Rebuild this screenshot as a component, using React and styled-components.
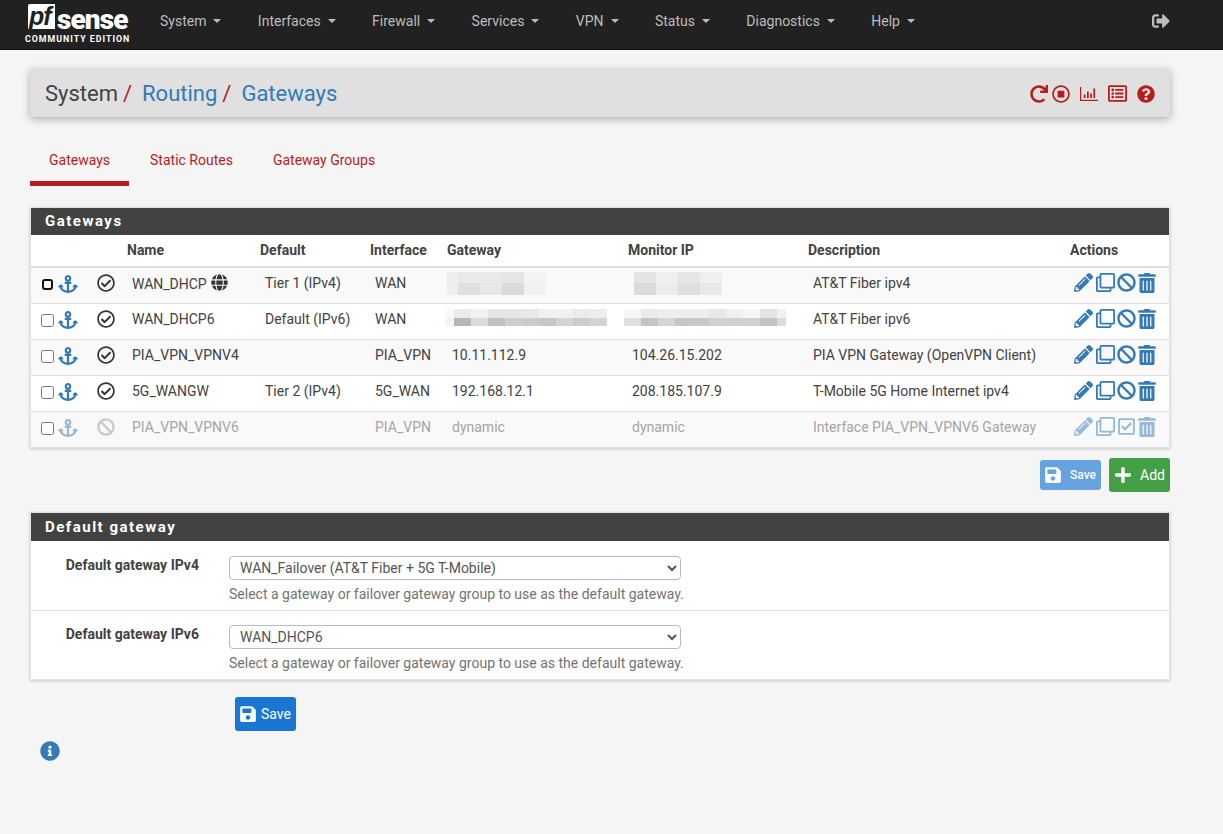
import React from 'react';
import styled, { createGlobalStyle } from 'styled-components';
import { FaAnchor, FaBan, FaGlobe, FaInfoCircle, FaPencilAlt, FaPlus, FaQuestionCircle, FaRegCheckCircle, FaRegCheckSquare, FaRegClone, FaRegStopCircle, FaRedo, FaRegListAlt, FaSave, FaSignOutAlt, FaTrashAlt } from 'react-icons/fa';

const Global = createGlobalStyle`
  html, body { margin: 0; padding: 0; background: #f5f5f5; }
  body { font-family: Roboto, "Liberation Sans", sans-serif; font-size: 14px; color: #424242; }
  * { box-sizing: border-box; }
`;

const Nav = styled.nav`
  height: 50px; background: #212121; border-bottom: 1px solid #0d0d0d;
  display: flex; align-items: center; padding: 0 53px 8px 26px; color: #bdbdbd;
`;
const Logo = styled.div`
  width: 104px; align-self: flex-start; padding-top: 4px; display: flex; flex-direction: column; align-items: flex-start; color: #fff;
`;
const LogoTop = styled.div`display: flex; align-items: flex-end; height: 25px; margin-left: 2px;`;
const Pf = styled.span`
  background: #fff; color: #212121; font: italic 900 25px/25px "Liberation Sans", sans-serif;
  height: 25px; width: 27px; padding-left: 1px; border-radius: 2px 0 0 0; letter-spacing: -1px;
`;
const Sense = styled.span`font: 900 28px/25px Roboto, sans-serif; margin-left: 2px; letter-spacing: -.9px; height: 25px; position: relative; top: 3px;`;
const Edition = styled.div`font: 700 8.8px/10px Roboto, sans-serif; letter-spacing: 1px; white-space: nowrap; margin: 5px 0 0 -1px;`;
const Menu = styled.div`display: flex; margin-left: 30px; flex: 1; gap: 36.4px;`;
const MenuItem = styled.div`
  display: flex; align-items: center; gap: 7px; font-size: 14px; white-space: nowrap;
  &::after { content: ''; border-top: 4px solid #bdbdbd; border-left: 4px solid transparent; border-right: 4px solid transparent; }
`;

const Main = styled.main`padding: 19px 53px 0 30px;`;
const Crumbs = styled.div`
  height: 48px; background: #e0e0e0; border-radius: 2px; box-shadow: 0 2px 8px rgba(0,0,0,.3);
  display: flex; align-items: center; padding: 1px 14px 0 15px; font-size: 22px; justify-content: space-between;
`;
const Trail = styled.div`display: flex; white-space: nowrap;`;
const Link = styled.span`color: #337ab7;`;
const Sep = styled.span`color: #b71c1c; margin: 0 10px 0 5px;`;
const HeadIcons = styled.div`display: flex; align-items: center; color: #b71c1c; font-size: 18px; gap: 10px; margin-right: 1px; svg { display: block; }`;

const Tabs = styled.div`display: flex; gap: 1px; margin-top: 20px; height: 49px;`;
const Tab = styled.div`
  padding: 16px 19px 0 20px; color: #b71c1c; font-size: 14px; white-space: nowrap; line-height: 14px;
  border-bottom: 5px solid ${p => p.$active ? '#b71c1c' : 'transparent'};
  &:first-child { padding-left: 19px; }
`;

const Panel = styled.section`
  background: #fff; border: 1px solid #e2e2e2; box-shadow: 0 1px 3px rgba(0,0,0,.2); margin-top: ${p => p.$top}px;
`;
const PanelHead = styled.div`
  height: ${p => p.$h}px; background: #424242; color: #fff; font-weight: 700; font-size: 15px; letter-spacing: 1.5px;
  line-height: ${p => p.$h}px; padding-left: 14px;
`;
const Table = styled.table`width: 100%; border-collapse: collapse; table-layout: fixed;`;
const Th = styled.th`
  height: 32px; font-size: 14px; font-weight: 700; text-align: left; color: #424242; padding: 0 0 2px ${p => p.$pad || 0}px;
  border-bottom: 2px solid #ddd; white-space: nowrap;
`;
const Row = styled.tr`
  background: ${p => p.$odd ? '#f9f9f9' : '#fff'}; color: ${p => p.$off ? '#a5a5a5' : '#424242'};
`;
const Td = styled.td`
  height: 36px; padding: 0 0 4px 5px; border-bottom: 1px solid #ddd; font-size: 14px; white-space: nowrap; overflow: visible;
  ${Row}:last-child & { border-bottom: 0; }
`;
const IconCell = styled.td`
  height: 36px; padding: 0 0 2px; border-bottom: 1px solid #ddd;
  ${Row}:last-child & { border-bottom: 0; }
`;
const Tools = styled.div`display: flex; align-items: center; padding-left: 10px;`;
const Check = styled.input`
  margin: 0; width: 13px; height: 13px; flex: none; accent-color: #333;
  ${p => p.$focus && 'appearance: none; width: 11px; height: 11px; margin: 1px; background: #fff; border: 2px solid #111; border-radius: 3px;'}
`;
const Blue = styled.span`display: flex; color: #337ab7; font-size: 20px; margin-left: 4px; opacity: ${p => p.$off ? .5 : 1};`;
const Status = styled.span`display: flex; font-size: 18px; color: ${p => p.$off ? '#c8c8c8' : '#333'}; margin: 0 0 2px 19px;`;
const Actions = styled.div`
  display: flex; align-items: center; gap: 2.5px; color: #337ab7; font-size: 19px; padding-left: 4px; margin-bottom: 3px;
  opacity: ${p => p.$off ? .5 : 1};
  svg { display: block; }
  svg:last-child { margin-left: -2px; }
`;
const Glyph = styled.span`display: inline-flex; vertical-align: -2px; margin-left: 4px; color: #333; font-size: 17px;`;
const Mosaic = styled.svg`display: block; margin-left: ${p => p.$m}px; margin-bottom: ${p => p.$b || 0}px;`;

const ButtonRow = styled.div`display: flex; justify-content: flex-end; align-items: center; gap: 8px; margin-top: 10px;`;
const Btn = styled.button`
  border: 0; color: #fff; font-family: Roboto, sans-serif; display: flex; align-items: center; border-radius: 3px; padding: 0;
  background: ${p => p.$c}; width: 61px; height: ${p => p.$h}px; font-size: ${p => p.$fs}px; opacity: ${p => p.$dim ? .65 : 1};
  gap: ${p => p.$gap}px; padding-left: ${p => p.$pl}px;
  ${p => p.$weight && `font-weight: ${p.$weight};`}
  svg { flex: none; }
`;
const FormRow = styled.div`
  display: grid; grid-template-columns: 168px 452px; column-gap: 30px; padding-top: ${p => p.$pt}px; height: ${p => p.$h}px;
  border-bottom: ${p => p.$last ? 0 : '1px solid #e0e0e0'};
`;
const Label = styled.label`font-weight: 700; text-align: right; font-size: 14px; line-height: 20px; white-space: nowrap;`;
const Select = styled.select`
  width: 452px; height: 24px; margin-top: 1px; font: 14px Roboto, sans-serif; color: #555; background: #fff; border: 1px solid #bbb;
  border-radius: 4px; padding: 0 6px; display: block;
`;
const Help = styled.div`color: #737373; font-size: 14px; line-height: 20px; margin-top: 4px; white-space: nowrap;`;
const SaveWrap = styled.div`padding: 17px 0 0 205px;`;
const InfoWrap = styled.div`color: #337ab7; font-size: 20px; margin: 10px 0 0 10px; display: flex;`;

const Patch = ({ rows, widths, h1, h2, m, b }) => {
  let x = 0;
  const xs = widths.map(cw => { const r = [x, cw]; x += cw; return r; });
  return (
    <Mosaic width={x} height={h1 + h2} $m={m} $b={b} viewBox={`0 0 ${x} ${h1 + h2}`}>
      {xs.map(([px, cw], i) => (
        <g key={i}>
          <rect x={px} y={0} width={cw} height={h1} fill={rows[0][i]} />
          <rect x={px} y={h1} width={cw} height={h2} fill={rows[1][i]} />
        </g>
      ))}
    </Mosaic>
  );
};

const patchGw1 = <Patch widths={[11,22,22,22,22]} h1={11} h2={12} m={-5} rows={[['#edefee','#e9e9e9','#e9e9e9','#e6e6e6','#f3f3f3'],['#eef0ef','#e0e0e0','#e7e7e7','#dadada','#f2f2f2']]} />;
const patchMon1 = <Patch widths={[22,22,22,22]} h1={11} h2={12} m={2} rows={[['#e4e4e4','#efefed','#e6e6e6','#eeeff1'],['#dbdbdb','#ececec','#dfdfdd','#e9e9eb']]} />;
const patchGw2 = <Patch widths={[9,17,17,17,17,17,17,17,17,17]} h1={9} h2={8} m={-7} b={4} rows={[['#fbf9f7','#e9ebee','#f2f2ef','#e6e6e6','#e6e6e6','#e8e8eb','#f3efec','#eef0f3','#ebebeb','#ecedec'],['#f8f3ee','#b3b7ba','#dcdcdc','#c2c0c0','#d0cfcc','#cccbd0','#cbc5c7','#d3d4d7','#cccccc','#d3d5d3']]} />;
const patchMon2 = <Patch widths={[17,17,17,17,17,17,17,17,17,9]} h1={9} h2={8} m={-8} b={4} rows={[['#f6f6f6','#ecebe9','#eceef0','#edefee','#f0edea','#e7e8ea','#f0f0f0','#f5f5f2','#e3e3e3','#eff0f2'],['#e0dfdd','#c4c4c4','#d4d6d5','#c6c7c6','#c9c8c6','#ced2d3','#cfd0d2','#d2d1cf','#c2c2c2','#dadde0']]} />;

const ChartIcon = () => (
  <svg width="18" height="18" viewBox="0 0 18 18" fill="currentColor">
    <rect x="0" y="2" width="1.2" height="14" />
    <rect x="0" y="14.8" width="18" height="1.2" />
    <rect x="3.8" y="9.5" width="1.7" height="3.5" />
    <rect x="7" y="6.5" width="1.7" height="6.5" />
    <rect x="10.2" y="8.5" width="1.7" height="4.5" />
    <rect x="13.4" y="3.5" width="1.7" height="9.5" />
  </svg>
);

const rowsData = [
  { name: 'WAN_DHCP', globe: true, def: 'Tier 1 (IPv4)', iface: 'WAN', gw: patchGw1, mon: patchMon1, desc: 'AT&T Fiber ipv4', focus: true },
  { name: 'WAN_DHCP6', def: 'Default (IPv6)', iface: 'WAN', gw: patchGw2, mon: patchMon2, desc: 'AT&T Fiber ipv6' },
  { name: 'PIA_VPN_VPNV4', def: '', iface: 'PIA_VPN', gw: '10.11.112.9', mon: '104.26.15.202', desc: 'PIA VPN Gateway (OpenVPN Client)' },
  { name: '5G_WANGW', def: 'Tier 2 (IPv4)', iface: '5G_WAN', gw: '192.168.12.1', mon: '208.185.107.9', desc: 'T-Mobile 5G Home Internet ipv4' },
  { name: 'PIA_VPN_VPNV6', def: '', iface: 'PIA_VPN', gw: 'dynamic', mon: 'dynamic', desc: 'Interface PIA_VPN_VPNV6 Gateway', off: true },
];

const menu = ['System', 'Interfaces', 'Firewall', 'Services', 'VPN', 'Status', 'Diagnostics', 'Help'];

export default function App() {
  return (
    <>
      <Global />
      <Nav>
        <Logo>
          <LogoTop><Pf>pf</Pf><Sense>sense</Sense></LogoTop>
          <Edition>COMMUNITY EDITION</Edition>
        </Logo>
        <Menu>{menu.map(m => <MenuItem key={m}>{m}</MenuItem>)}</Menu>
        <FaSignOutAlt size={18} color="#bdbdbd" />
      </Nav>
      <Main>
        <Crumbs>
          <Trail>System<Sep>/</Sep><Link>Routing</Link><Sep>/</Sep><Link>Gateways</Link></Trail>
          <HeadIcons>
            <FaRedo size={18} style={{ marginRight: -6 }} /><FaRegStopCircle size={18} /><ChartIcon /><FaRegListAlt size={19} /><FaQuestionCircle size={18} />
          </HeadIcons>
        </Crumbs>
        <Tabs>
          <Tab $active>Gateways</Tab><Tab>Static Routes</Tab><Tab>Gateway Groups</Tab>
        </Tabs>
        <Panel $top={21}>
          <PanelHead $h={27}>Gateways</PanelHead>
          <Table>
            <colgroup>
              <col style={{ width: 96 }} /><col style={{ width: 133 }} /><col style={{ width: 110 }} /><col style={{ width: 77 }} />
              <col style={{ width: 180 }} /><col style={{ width: 181 }} /><col style={{ width: 262 }} /><col />
            </colgroup>
            <thead>
              <tr>
                <Th /><Th>Name</Th><Th>Default</Th><Th>Interface</Th><Th>Gateway</Th><Th $pad={1}>Monitor IP</Th><Th>Description</Th><Th>Actions</Th>
              </tr>
            </thead>
            <tbody>
              {rowsData.map((r, i) => (
                <Row key={r.name} $odd={i % 2 === 0} $off={r.off}>
                  <IconCell>
                    <Tools>
                      <Check type="checkbox" $focus={r.focus} />
                      <Blue $off={r.off}><FaAnchor /></Blue>
                      <Status $off={r.off}>{r.off ? <FaBan /> : <FaRegCheckCircle />}</Status>
                    </Tools>
                  </IconCell>
                  <Td>{r.name}{r.globe && <Glyph><FaGlobe /></Glyph>}</Td>
                  <Td>{r.def}</Td>
                  <Td>{r.iface}</Td>
                  <Td>{r.gw}</Td>
                  <Td>{r.mon}</Td>
                  <Td>{r.desc}</Td>
                  <IconCell>
                    <Actions $off={r.off}>
                      <FaPencilAlt /><FaRegClone />{r.off ? <FaRegCheckSquare /> : <FaBan />}<FaTrashAlt size={20} />
                    </Actions>
                  </IconCell>
                </Row>
              ))}
            </tbody>
          </Table>
        </Panel>
        <ButtonRow>
          <Btn $c="#1976d2" $h={30} $fs={12} $dim $gap={8} $pl={4} $weight={500}><FaSave size={18} />Save</Btn>
          <Btn $c="#43a047" $h={34} $fs={14} $gap={8} $pl={5}><FaPlus size={18} />Add</Btn>
        </ButtonRow>
        <Panel $top={20}>
          <PanelHead $h={28}>Default gateway</PanelHead>
          <FormRow $h={70} $pt={14}>
            <Label>Default gateway IPv4</Label>
            <div>
              <Select defaultValue="a"><option value="a">WAN_Failover (AT&T Fiber + 5G T-Mobile)</option></Select>
              <Help>Select a gateway or failover gateway group to use as the default gateway.</Help>
            </div>
          </FormRow>
          <FormRow $h={68} $pt={13} $last>
            <Label>Default gateway IPv6</Label>
            <div>
              <Select defaultValue="a"><option value="a">WAN_DHCP6</option></Select>
              <Help>Select a gateway or failover gateway group to use as the default gateway.</Help>
            </div>
          </FormRow>
        </Panel>
        <SaveWrap>
          <Btn $c="#1976d2" $h={34} $fs={14} $gap={4} $pl={4}><FaSave size={18} />Save</Btn>
        </SaveWrap>
        <InfoWrap><FaInfoCircle /></InfoWrap>
      </Main>
    </>
  );
}
